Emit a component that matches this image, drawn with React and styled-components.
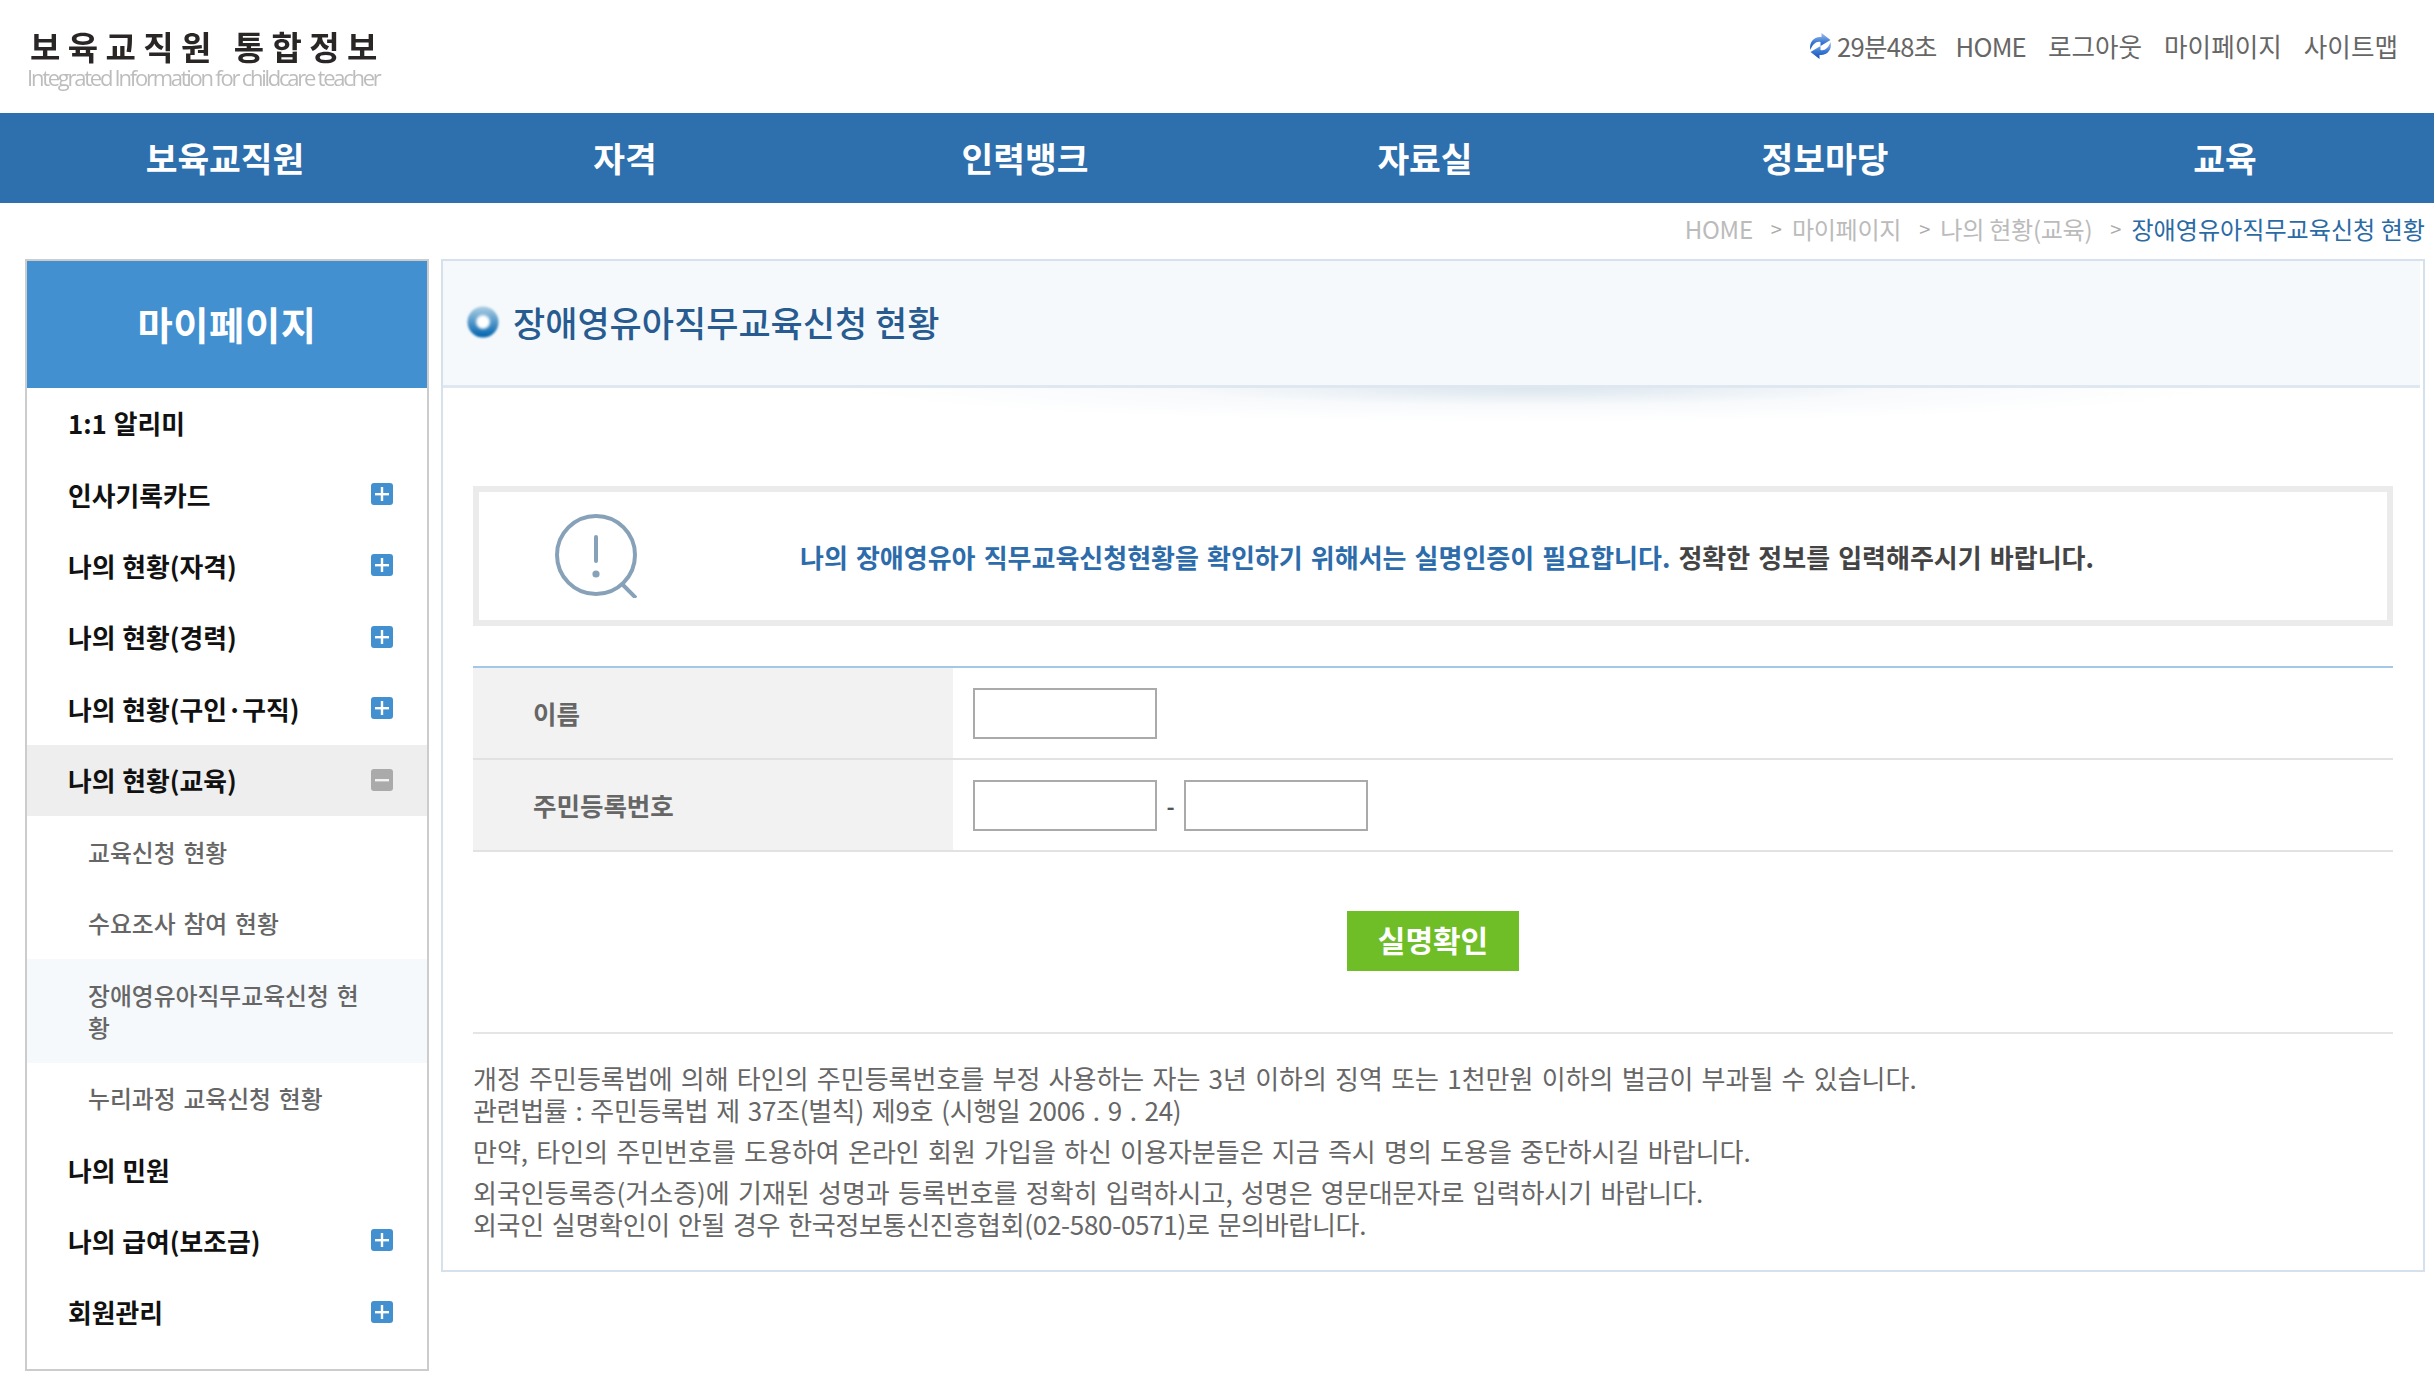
import React from 'react';
import styled, { createGlobalStyle } from 'styled-components';

const FONT = '"Noto Sans CJK KR", "Noto Sans", sans-serif';

const GlobalStyle = createGlobalStyle`
  html, body {
    margin: 0;
    padding: 0;
    background: #fff;
    font-family: ${FONT};
  }
  * { box-sizing: border-box; }
`;

const Page = styled.div`
  width: 2434px;
  min-height: 1394px;
  background: #fff;
`;

const Header = styled.header`
  height: 113px;
  display: flex;
  align-items: flex-start;
  justify-content: space-between;
  padding: 0 36px 0 27px;
`;

const Logo = styled.div`
  padding-top: 28px;
  filter: blur(0.4px);
`;

const LogoTitle = styled.div`
  font-size: 33px;
  line-height: 37px;
  font-weight: 700;
  letter-spacing: 7.4px;
  color: #2a2626;
  white-space: nowrap;
  padding-left: 3px;
`;

const LogoSub = styled.div`
  font-family: "Open Sans", sans-serif;
  font-size: 22px;
  line-height: 24px;
  letter-spacing: -2.25px;
  color: #bdbdbd;
  white-space: nowrap;
`;

const Utils = styled.div`
  display: flex;
  align-items: center;
  height: 91px;
  gap: 22px;
  font-size: 25.6px;
  color: #666;
`;

const Timer = styled.span`
  display: flex;
  align-items: center;
  gap: 4px;
  margin-right: -3px;
  letter-spacing: -0.7px;
`;

const UtilLink = styled.a`
  color: #666;
  white-space: nowrap;
  letter-spacing: ${(p) => (p.$latin ? '-0.8px' : '0')};
`;

const Nav = styled.nav`
  height: 90px;
  background: #2e6fad;
  display: flex;
  padding: 0 9px 0 25px;
`;

const NavItem = styled.a`
  flex: 1;
  display: flex;
  align-items: center;
  justify-content: center;
  padding-bottom: 2px;
  font-size: 34.5px;
  font-weight: 700;
  color: #fff;
`;

const Crumbs = styled.div`
  height: 56px;
  display: flex;
  align-items: center;
  justify-content: flex-end;
  padding: 0 9px 5px 0;
  font-size: 24.1px;
  color: #bbb;
`;

const Crumb = styled.span`
  color: ${(p) => (p.$current ? '#2a6aa5' : '#bbb')};
  letter-spacing: ${(p) => (p.$current ? '0' : '-0.3px')};
  white-space: nowrap;
`;

const CrumbSep = styled.span`
  margin: 0 10px 0 18px;
  font-size: 20px;
  color: #aaa;
`;

const Main = styled.div`
  display: flex;
  align-items: flex-start;
  gap: 12px;
  padding: 0 9px 0 25px;
`;

const Sidebar = styled.aside`
  width: 404px;
  flex: none;
  border: 2px solid #ccc;
  padding-bottom: 20px;
`;

const SideTitle = styled.h2`
  margin: 0;
  height: 127px;
  display: flex;
  align-items: center;
  justify-content: center;
  padding-bottom: 2px;
  background: #4290d0;
  color: #fff;
  font-size: 38.3px;
  font-weight: 700;
  letter-spacing: 0.6px;
`;

const SideItem = styled.a`
  display: flex;
  align-items: center;
  justify-content: space-between;
  height: 71.4px;
  padding: 0 34px 2px 41px;
  font-size: 25.8px;
  font-weight: 700;
  word-spacing: 1px;
  color: #111;
  background: ${(p) => (p.$open ? '#eee' : 'transparent')};
`;

const SubItem = styled.a`
  display: block;
  padding: 19.5px 56px 19.5px 61px;
  font-size: 23.8px;
  line-height: 32.4px;
  font-weight: 500;
  word-spacing: 2.5px;
  color: #666;
  word-break: break-all;
  background: ${(p) => (p.$current ? '#f5f9fc' : 'transparent')};
`;

const Toggle = styled.svg`
  width: 22px;
  height: 22px;
  flex: none;
`;

const Panel = styled.section`
  flex: 1;
  height: 1013px;
  border: 2px solid #d5e1ed;
  min-width: 0;
`;

const TitleBar = styled.div`
  position: relative;
  height: 127px;
  display: flex;
  align-items: center;
  gap: 14px;
  padding: 0 0 3px 24px;
  margin-right: 3px;
  background: #f5f9fc;
  border-bottom: 3px solid #dfe8f1;

  &::after {
    content: '';
    position: absolute;
    left: 400px;
    right: 200px;
    top: 100%;
    height: 34px;
    margin-top: 3px;
    background: radial-gradient(ellipse 50% 100% at 50% 0, #dbe6ee 0, rgba(244, 247, 250, 0.7) 50%, rgba(255, 255, 255, 0) 100%);
  }
`;

const Bullet = styled.svg`
  width: 32px;
  height: 32px;
  flex: none;
  filter: blur(0.8px);
`;

const Title = styled.h1`
  margin: 0;
  font-size: 35px;
  font-weight: 500;
  color: #285c90;
`;

const PanelBody = styled.div`
  padding: 98px 30px 0 30px;
`;

const Notice = styled.div`
  height: 140px;
  display: flex;
  align-items: center;
  border: 6px solid #ebebeb;
  padding-left: 76px;
`;

const NoticeText = styled.p`
  margin: 0 0 0 163px;
  font-size: 26px;
  font-weight: 700;
  word-spacing: 2.2px;
  color: #444;
  white-space: nowrap;
`;

const NoticeStrong = styled.span`
  color: #2d6cab;
`;

const FormTable = styled.div`
  margin-top: 40px;
  border-top: 2px solid #a3c7e6;
`;

const FormRow = styled.div`
  display: flex;
  height: 92px;
  border-bottom: 2px solid #e2e2e2;
`;

const FormLabel = styled.div`
  width: 480px;
  flex: none;
  display: flex;
  align-items: center;
  padding: 0 0 2px 60px;
  background: #f2f2f2;
  font-size: 25.5px;
  font-weight: 700;
  color: #666;
`;

const FormField = styled.div`
  display: flex;
  align-items: center;
  padding-left: 20px;
`;

const TextInput = styled.input`
  width: 184px;
  height: 51px;
  border: 2px solid #aaa;
  background: #fff;
  outline: none;
`;

const Dash = styled.span`
  width: 27px;
  text-align: center;
  font-size: 22px;
  font-weight: 700;
  color: #555;
`;

const ButtonRow = styled.div`
  display: flex;
  justify-content: center;
  padding: 59px 0 61px;
`;

const SubmitButton = styled.button`
  width: 172px;
  height: 60px;
  border: 0;
  padding: 0 0 4px;
  background: #6fbe28;
  color: #fff;
  font-family: ${FONT};
  font-size: 30px;
  font-weight: 700;
`;

const Notes = styled.div`
  border-top: 2px solid #e5e5e5;
  padding-top: 28px;
  font-size: 26px;
  line-height: 32px;
  word-spacing: 2.4px;
  color: #666;
`;

const Note = styled.p`
  margin: 0 0 9px;
`;

const DigitLine = styled.span`
  letter-spacing: -0.3px;
`;

const RefreshIcon = () => (
  <svg width="25" height="26" viewBox="0 0 24 26">
    <defs>
      <linearGradient id="refreshBlue" x1="0" y1="0" x2="0" y2="1">
        <stop offset="0" stopColor="#a3bfe8" />
        <stop offset="0.55" stopColor="#3a78d4" />
        <stop offset="1" stopColor="#1450b0" />
      </linearGradient>
    </defs>
    <path d="M2 17C0 9 6 3 13 4L13 0 22 7 12 13 12 9C8 8 4 11 2 17z" fill="url(#refreshBlue)" />
    <path d="M22 9C24 17 18 23 11 22L11 26 2 19 12 13 12 17C16 18 20 15 22 9z" fill="url(#refreshBlue)" />
  </svg>
);

const ToggleIcon = ({ open }) => (
  <Toggle viewBox="0 0 22 22">
    <rect width="22" height="22" rx="3" fill={open ? '#aaa' : '#4290d0'} />
    <rect x="4" y="10" width="14" height="2.4" fill="#fff" opacity={open ? 0.85 : 1} />
    {!open && <rect x="9.8" y="4" width="2.4" height="14" fill="#fff" />}
  </Toggle>
);

const AlertIcon = () => (
  <svg width="82" height="84" viewBox="0 0 82 84" fill="none" stroke="#87a2b8" strokeWidth="4">
    <ellipse cx="41" cy="41" rx="39" ry="39" />
    <path d="M41 23v24" strokeLinecap="round" />
    <circle cx="41" cy="60" r="1.6" fill="#87a2b8" />
    <path d="M67 70l14 14" />
  </svg>
);

const TitleBullet = () => (
  <Bullet viewBox="0 0 32 32">
    <defs>
      <linearGradient id="ringBlue" x1="0" y1="0" x2="0" y2="1">
        <stop offset="0" stopColor="#aed0e3" />
        <stop offset="0.55" stopColor="#4a92c6" />
        <stop offset="1" stopColor="#0062ac" />
      </linearGradient>
      <radialGradient id="ringCore">
        <stop offset="0.6" stopColor="#fff" />
        <stop offset="1" stopColor="#fff" stopOpacity="0" />
      </radialGradient>
    </defs>
    <circle cx="16" cy="16" r="15.5" fill="url(#ringBlue)" />
    <circle cx="16" cy="16" r="8.5" fill="url(#ringCore)" />
  </Bullet>
);

const NAV_ITEMS = ['보육교직원', '자격', '인력뱅크', '자료실', '정보마당', '교육'];

const SIDE_MENU = [
  { label: '1:1 알리미' },
  { label: '인사기록카드', toggle: true },
  { label: '나의 현황(자격)', toggle: true },
  { label: '나의 현황(경력)', toggle: true },
  { label: '나의 현황(구인·구직)', toggle: true },
  {
    label: '나의 현황(교육)',
    toggle: true,
    open: true,
    children: [
      { label: '교육신청 현황' },
      { label: '수요조사 참여 현황' },
      { label: '장애영유아직무교육신청 현황', current: true },
      { label: '누리과정 교육신청 현황' },
    ],
  },
  { label: '나의 민원' },
  { label: '나의 급여(보조금)', toggle: true },
  { label: '회원관리', toggle: true },
];

export default function App() {
  return (
    <Page>
      <GlobalStyle />
      <Header>
        <Logo>
          <LogoTitle>보육교직원 통합정보</LogoTitle>
          <LogoSub>Integrated Information for childcare teacher</LogoSub>
        </Logo>
        <Utils>
          <Timer>
            <RefreshIcon />
            29분48초
          </Timer>
          <UtilLink $latin>HOME</UtilLink>
          <UtilLink>로그아웃</UtilLink>
          <UtilLink>마이페이지</UtilLink>
          <UtilLink>사이트맵</UtilLink>
        </Utils>
      </Header>

      <Nav>
        {NAV_ITEMS.map((item) => (
          <NavItem key={item}>{item}</NavItem>
        ))}
      </Nav>

      <Crumbs>
        <Crumb>HOME</Crumb>
        <CrumbSep>&gt;</CrumbSep>
        <Crumb>마이페이지</Crumb>
        <CrumbSep>&gt;</CrumbSep>
        <Crumb>나의 현황(교육)</Crumb>
        <CrumbSep>&gt;</CrumbSep>
        <Crumb $current>장애영유아직무교육신청 현황</Crumb>
      </Crumbs>

      <Main>
        <Sidebar>
          <SideTitle>마이페이지</SideTitle>
          {SIDE_MENU.map((item) => (
            <React.Fragment key={item.label}>
              <SideItem $open={item.open}>
                {item.label}
                {item.toggle && <ToggleIcon open={item.open} />}
              </SideItem>
              {item.children && item.children.map((child) => (
                <SubItem key={child.label} $current={child.current}>{child.label}</SubItem>
              ))}
            </React.Fragment>
          ))}
        </Sidebar>

        <Panel>
          <TitleBar>
            <TitleBullet />
            <Title>장애영유아직무교육신청 현황</Title>
          </TitleBar>
          <PanelBody>
            <Notice>
              <AlertIcon />
              <NoticeText>
                <NoticeStrong>나의 장애영유아 직무교육신청현황을 확인하기 위해서는 실명인증이 필요합니다.</NoticeStrong>
                {' '}정확한 정보를 입력해주시기 바랍니다.
              </NoticeText>
            </Notice>

            <FormTable>
              <FormRow>
                <FormLabel>이름</FormLabel>
                <FormField>
                  <TextInput />
                </FormField>
              </FormRow>
              <FormRow>
                <FormLabel>주민등록번호</FormLabel>
                <FormField>
                  <TextInput />
                  <Dash>-</Dash>
                  <TextInput />
                </FormField>
              </FormRow>
            </FormTable>

            <ButtonRow>
              <SubmitButton>실명확인</SubmitButton>
            </ButtonRow>

            <Notes>
              <Note>
                개정 주민등록법에 의해 타인의 주민등록번호를 부정 사용하는 자는 3년 이하의 징역 또는 1천만원 이하의 벌금이 부과될 수 있습니다.
                <br />
                <DigitLine>관련법률 : 주민등록법 제 37조(벌칙) 제9호 (시행일 2006 . 9 . 24)</DigitLine>
              </Note>
              <Note>만약, 타인의 주민번호를 도용하여 온라인 회원 가입을 하신 이용자분들은 지금 즉시 명의 도용을 중단하시길 바랍니다.</Note>
              <Note>
                외국인등록증(거소증)에 기재된 성명과 등록번호를 정확히 입력하시고, 성명은 영문대문자로 입력하시기 바랍니다.
                <br />
                <DigitLine>외국인 실명확인이 안될 경우 한국정보통신진흥협회(02-580-0571)로 문의바랍니다.</DigitLine>
              </Note>
            </Notes>
          </PanelBody>
        </Panel>
      </Main>
    </Page>
  );
}
